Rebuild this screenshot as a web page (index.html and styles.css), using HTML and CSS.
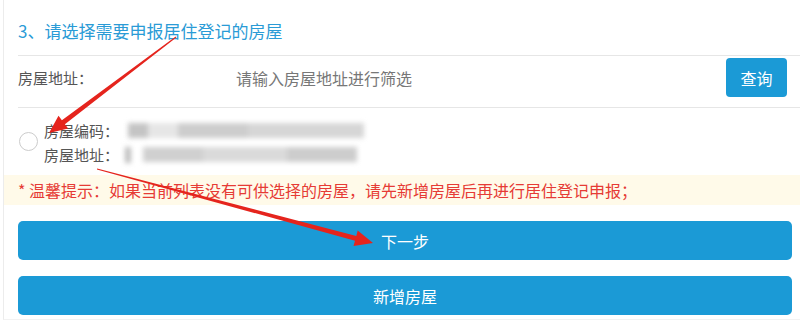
FILE: index.html
```html
<!DOCTYPE html>
<html lang="zh-CN">
<head>
  <meta charset="UTF-8" />
  <title>选择房屋</title>
  <link rel="stylesheet" href="styles.css">
</head>
<body>
  <div class="panel">
    <div class="step-title">3、请选择需要申报居住登记的房屋</div>

    <div class="search-row">
      <span class="search-label">房屋地址：</span>
      <input class="search-input" type="text" placeholder="请输入房屋地址进行筛选">
      <button class="btn-query">查询</button>
    </div>

    <label class="house-item">
      <span class="radio"></span>
      <span class="house-info">
        <span class="info-line">房屋编码：<span class="masked masked-code"><i class="m1"></i><i class="m2"></i><i class="m3"></i><i class="m4"></i></span></span>
        <span class="info-line">房屋地址：<span class="masked masked-addr"><i class="m5"></i><i class="m6"></i><i class="m7"></i><i class="m8"></i></span></span>
      </span>
    </label>

    <div class="tip">* 温馨提示：如果当前列表没有可供选择的房屋，请先新增房屋后再进行居住登记申报；</div>

    <div class="actions">
      <button class="btn-block">下一步</button>
      <button class="btn-block">新增房屋</button>
    </div>
  </div>

  <!-- red annotation arrows drawn over the screenshot -->
  <svg class="marks" width="800" height="330" viewBox="0 0 800 330">
    <polygon points="176.3,37.4 64.9,124.2 68.2,128.5 49,133 58.5,115.8 61.9,120.2 175.7,36.6" />
    <polygon points="96.9,169.5 355,240.7 353.5,246 373,243 357.7,230.6 356.3,235.9 97.1,168.5" />
  </svg>
</body>
</html>
```

FILE: styles.css
```css
body {
  margin: 0;
  background: #fff;
  font-family: "Noto Sans CJK SC", "Noto Sans", sans-serif;
  position: relative;
  width: 800px;
  height: 330px;
  overflow: hidden;
}
.panel {
  margin-left: 3px;
  border-left: 1px solid #ececec;
  border-bottom: 1px solid #f2f2f2;
  padding-bottom: 4px;
}
.step-title {
  margin-left: 14px;
  height: 49px;
  padding-top: 6px;
  display: flex;
  align-items: center;
  border-bottom: 1px solid #e6e6e6;
  color: #2a9bd6;
  font-size: 17px;
}
.search-row {
  margin-left: 14px;
  padding: 2px 13px 10px 0;
  display: flex;
  align-items: center;
  border-bottom: 1px solid #e6e6e6;
}
.search-label {
  width: 218px;
  color: #555;
  font-size: 15px;
}
.search-input {
  flex: 1;
  border: none;
  outline: none;
  padding: 0;
  font-family: inherit;
  font-size: 16px;
  color: #333;
}
.search-input::placeholder {
  color: #777;
}
.btn-query {
  width: 61px;
  height: 39px;
  border: none;
  border-radius: 4px;
  background: #1b9ad6;
  color: #fff;
  font-family: inherit;
  font-size: 16px;
  padding: 0;
}
.house-item {
  display: flex;
  align-items: center;
  padding: 10px 0 6px 15px;
  height: 49px;
}
.radio {
  width: 17px;
  height: 17px;
  border: 1px solid #ccc;
  border-radius: 50%;
  margin-right: 6px;
  margin-top: -3px;
}
.house-info {
  display: flex;
  flex-direction: column;
}
.info-line {
  display: flex;
  align-items: center;
  height: 24px;
  color: #555;
  font-size: 15px;
}
.masked {
  display: flex;
  align-items: center;
  filter: blur(2.5px);
  margin-left: 9px;
}
.masked i {
  display: block;
  height: 15px;
  background: #d6d6d6;
}
.masked-code .m1 { width: 20px; background: #c4c4c4; }
.masked-code .m2 { width: 30px; background: #e6e6e6; }
.masked-code .m3 { width: 70px; background: #cdcdcd; }
.masked-code .m4 { width: 116px; background: #d6d6d6; }
.masked-addr { margin-left: 6px; }
.masked-addr .m5 { width: 6px; height: 16px; background: #bdbdbd; margin-right: 12px; }
.masked-addr .m6 { width: 60px; background: #d0d0d0; }
.masked-addr .m7 { width: 84px; background: #dadada; }
.masked-addr .m8 { width: 70px; background: #cdcdcd; }
.tip {
  margin-top: 2px;
  height: 30px;
  line-height: 30px;
  padding-left: 14px;
  background: #fffae9;
  color: #e63b35;
  font-size: 16px;
}
.actions {
  padding: 16px 8px 0 14px;
  display: flex;
  flex-direction: column;
  gap: 16px;
}
.btn-block {
  height: 39px;
  border: none;
  border-radius: 5px;
  background: #1b9ad6;
  color: #fff;
  font-family: inherit;
  font-size: 16px;
}
.marks {
  position: absolute;
  left: 0;
  top: 0;
  pointer-events: none;
}
.marks polygon {
  fill: #e5241d;
}
```
